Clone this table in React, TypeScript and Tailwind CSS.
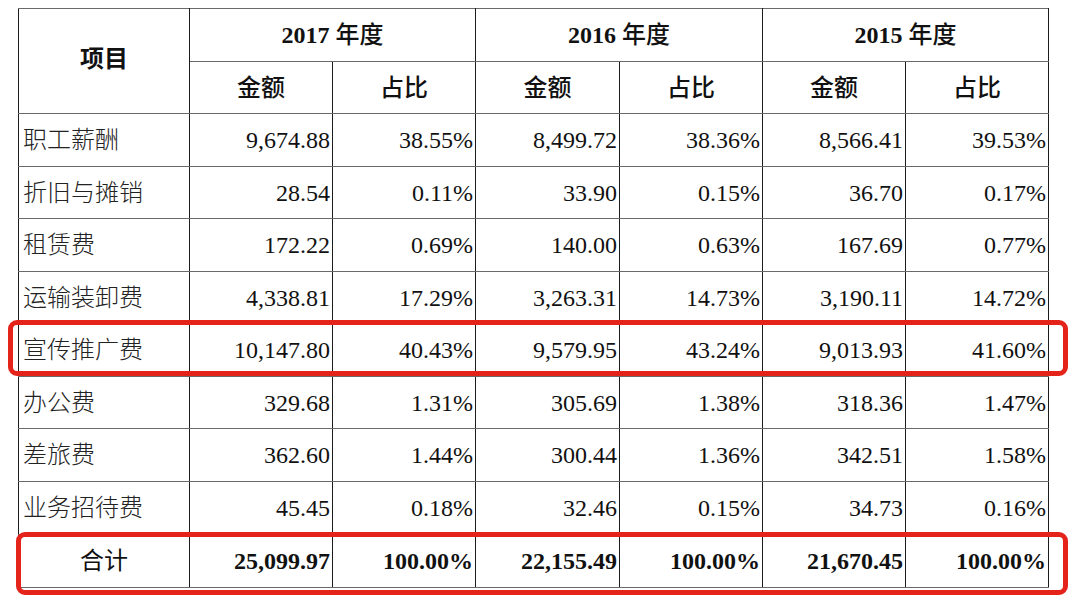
import React from "react";

type Row = { label: string; v: string[] };

const rows: Row[] = [
  { label: "职工薪酬", v: ["9,674.88", "38.55%", "8,499.72", "38.36%", "8,566.41", "39.53%"] },
  { label: "折旧与摊销", v: ["28.54", "0.11%", "33.90", "0.15%", "36.70", "0.17%"] },
  { label: "租赁费", v: ["172.22", "0.69%", "140.00", "0.63%", "167.69", "0.77%"] },
  { label: "运输装卸费", v: ["4,338.81", "17.29%", "3,263.31", "14.73%", "3,190.11", "14.72%"] },
  { label: "宣传推广费", v: ["10,147.80", "40.43%", "9,579.95", "43.24%", "9,013.93", "41.60%"] },
  { label: "办公费", v: ["329.68", "1.31%", "305.69", "1.38%", "318.36", "1.47%"] },
  { label: "差旅费", v: ["362.60", "1.44%", "300.44", "1.36%", "342.51", "1.58%"] },
  { label: "业务招待费", v: ["45.45", "0.18%", "32.46", "0.15%", "34.73", "0.16%"] },
];

const total = ["25,099.97", "100.00%", "22,155.49", "100.00%", "21,670.45", "100.00%"];
const rowH = ["h-[53px]", "h-[52px]", "h-[53px]", "h-[52px]", "h-[53px]", "h-[52px]", "h-[53px]", "h-[53px]"];

const cell =
  "border-y border-x border-y-[#6a6a6a] border-x-[#1c1c1c] p-0 align-middle";

export default function App() {
  return (
    <div
      className="relative w-[1080px] h-[602px] bg-white overflow-hidden text-[#111]"
      style={{ fontFamily: '"Liberation Serif", "Noto Sans CJK SC", serif' }}
    >
      <div className="pt-[8px] pl-[18px]">
        <table className="table-fixed border-collapse w-[1031px] text-[24px] leading-none">
          <colgroup>
            <col className="w-[171px]" />
            <col className="w-[143px]" />
            <col className="w-[143px]" />
            <col className="w-[144px]" />
            <col className="w-[143px]" />
            <col className="w-[143px]" />
            <col className="w-[143px]" />
          </colgroup>
          <thead>
            <tr className="h-[53px]">
              <th rowSpan={2} className={`${cell} text-center font-bold`}>
                <span className="relative top-[-2px]">项目</span>
              </th>
              {["2017", "2016", "2015"].map((y) => (
                <th key={y} colSpan={2} className={`${cell} text-center font-bold`}>
                  {y} <span className="font-medium">年度</span>
                </th>
              ))}
            </tr>
            <tr className="h-[52px]">
              {[0, 1, 2].map((i) => (
                <React.Fragment key={i}>
                  <th className={`${cell} text-center font-medium`}>金额</th>
                  <th className={`${cell} text-center font-medium`}>占比</th>
                </React.Fragment>
              ))}
            </tr>
          </thead>
          <tbody>
            {rows.map((r, i) => (
              <tr key={r.label} className={rowH[i]}>
                <td className={`${cell} text-left pl-[4px] font-light text-[#222]`}>{r.label}</td>
                {r.v.map((v, j) => (
                  <td key={j} className={`${cell} text-right pr-[2px]`}>
                    {v}
                  </td>
                ))}
              </tr>
            ))}
            <tr className="h-[53px]">
              <td className={`${cell} text-center font-normal`}>合计</td>
              {total.map((v, j) => (
                <td key={j} className={`${cell} text-right pr-[2px] font-bold`}>
                  {v}
                </td>
              ))}
            </tr>
          </tbody>
        </table>
      </div>

      <div className="absolute left-[8px] top-[320px] w-[1060px] h-[56px] border-[5px] border-[#e4231b] rounded-[9px] pointer-events-none" />
      <div className="absolute left-[16px] top-[532px] w-[1052px] h-[63px] border-[5px] border-[#e4231b] rounded-[9px] pointer-events-none" />
    </div>
  );
}
